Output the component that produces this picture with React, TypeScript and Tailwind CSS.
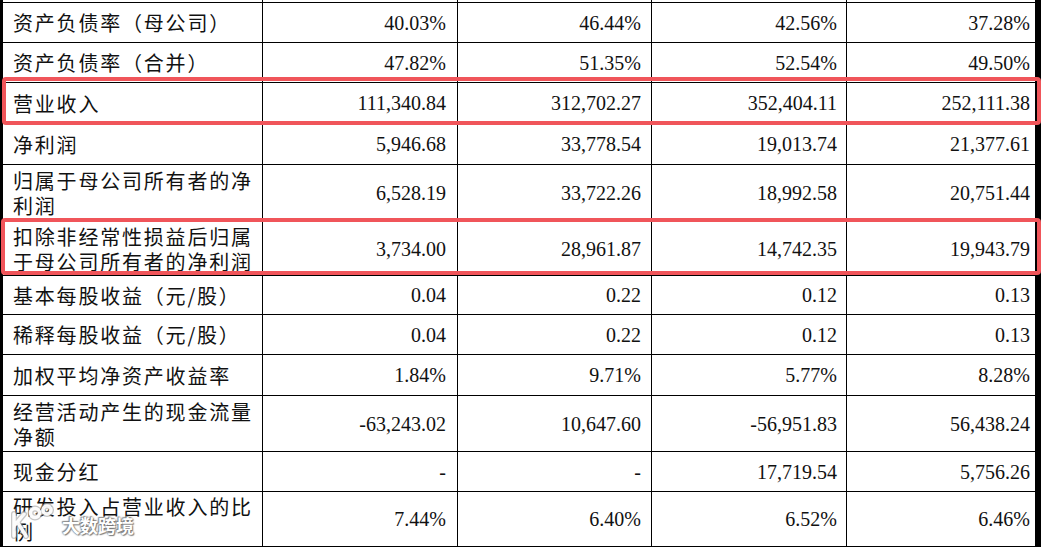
import React from "react";

type Row = { label: string[]; vals: string[]; h: number };

const rows: Row[] = [
  { label: ["资产负债率（母公司）"], vals: ["40.03%", "46.44%", "42.56%", "37.28%"], h: 40 },
  { label: ["资产负债率（合并）"], vals: ["47.82%", "51.35%", "52.54%", "49.50%"], h: 40 },
  { label: ["营业收入"], vals: ["111,340.84", "312,702.27", "352,404.11", "252,111.38"], h: 41 },
  { label: ["净利润"], vals: ["5,946.68", "33,778.54", "19,013.74", "21,377.61"], h: 41 },
  { label: ["归属于母公司所有者的净", "利润"], vals: ["6,528.19", "33,722.26", "18,992.58", "20,751.44"], h: 57 },
  { label: ["扣除非经常性损益后归属", "于母公司所有者的净利润"], vals: ["3,734.00", "28,961.87", "14,742.35", "19,943.79"], h: 54 },
  { label: ["基本每股收益（元/股）"], vals: ["0.04", "0.22", "0.12", "0.13"], h: 39 },
  { label: ["稀释每股收益（元/股）"], vals: ["0.04", "0.22", "0.12", "0.13"], h: 40 },
  { label: ["加权平均净资产收益率"], vals: ["1.84%", "9.71%", "5.77%", "8.28%"], h: 41 },
  { label: ["经营活动产生的现金流量", "净额"], vals: ["-63,243.02", "10,647.60", "-56,951.83", "56,438.24"], h: 56 },
  { label: ["现金分红"], vals: ["-", "-", "17,719.54", "5,756.26"], h: 40 },
  { label: ["研发投入占营业收入的比", "例"], vals: ["7.44%", "6.40%", "6.52%", "6.46%"], h: 55 },
];

const valWidths = ["w-[195px]", "w-[194px]", "w-[195px]", "w-[188px]"];
const valPads = ["pr-[11px]", "pr-[10px]", "pr-[9px]", "pr-[5px]"];

function TableRow({ row }: { row: Row }) {
  return (
    <div className="flex border-b border-black" style={{ height: row.h }}>
      <div
        className="w-[260px] border-r border-black pl-[10px] flex flex-col justify-center text-[20px] leading-[25px] tracking-[1.8px] text-[#111]"
        style={{ fontFamily: '"Noto Sans CJK SC", sans-serif' }}
      >
        {row.label.map((l, i) => (
          <div key={i} className="whitespace-nowrap h-[25px]">{l}</div>
        ))}
      </div>
      {row.vals.map((v, i) => (
        <div
          key={i}
          className={`${valWidths[i]} ${i < 3 ? "border-r border-black" : ""} ${valPads[i]} flex items-center justify-end text-[20px] text-[#111]`}
          style={{ fontFamily: '"Liberation Serif", serif' }}
        >
          {v}
        </div>
      ))}
    </div>
  );
}

export default function App() {
  return (
    <div className="relative w-[1044px] h-[549px] bg-white overflow-hidden">
      <div className="w-[1041px] border-l-[3px] border-r-[6px] border-black">
        <div className="flex h-[3px] border-b border-black">
          <div className="w-[260px] border-r border-black" />
          <div className="w-[195px] border-r border-black" />
          <div className="w-[194px] border-r border-black" />
          <div className="w-[195px] border-r border-black" />
          <div className="w-[188px]" />
        </div>
        {rows.map((r, i) => (
          <TableRow key={i} row={r} />
        ))}
      </div>
      <div className="absolute left-[2px] top-[77px] w-[1039px] h-[48px] border-[4px] border-[#f0555a] rounded-[4px]" />
      <div className="absolute left-[1px] top-[218px] w-[1040px] h-[57px] border-[4px] border-[#f0555a] rounded-[4px]" />
      <div className="absolute left-[8px] top-[504px] flex items-center gap-[4px]">
        <svg width="50" height="36" viewBox="0 0 50 36" fill="none">
          <g stroke="#9a9a9a" strokeWidth="6" strokeLinecap="round" strokeLinejoin="round" opacity="0.55">
            <path d="M6 10 L6 32 M6 22 L16 10 M10 19 L18 32" />
            <circle cx="27" cy="9" r="4.5" />
            <circle cx="39" cy="6" r="4" />
          </g>
          <g stroke="#ffffff" strokeWidth="3.5" strokeLinecap="round" strokeLinejoin="round" opacity="0.95">
            <path d="M6 10 L6 32 M6 22 L16 10 M10 19 L18 32" />
            <circle cx="27" cy="9" r="4.5" />
            <circle cx="39" cy="6" r="4" />
          </g>
        </svg>
        <span
          className="text-[18px] font-bold text-white leading-[24px] mt-[6px]"
          style={{
            fontFamily: '"Noto Sans CJK SC", sans-serif',
            textShadow: "0 0 2px #666, 1px 1px 1px #888, -1px -1px 1px #999",
          }}
        >
          大数跨境
        </span>
      </div>
    </div>
  );
}
